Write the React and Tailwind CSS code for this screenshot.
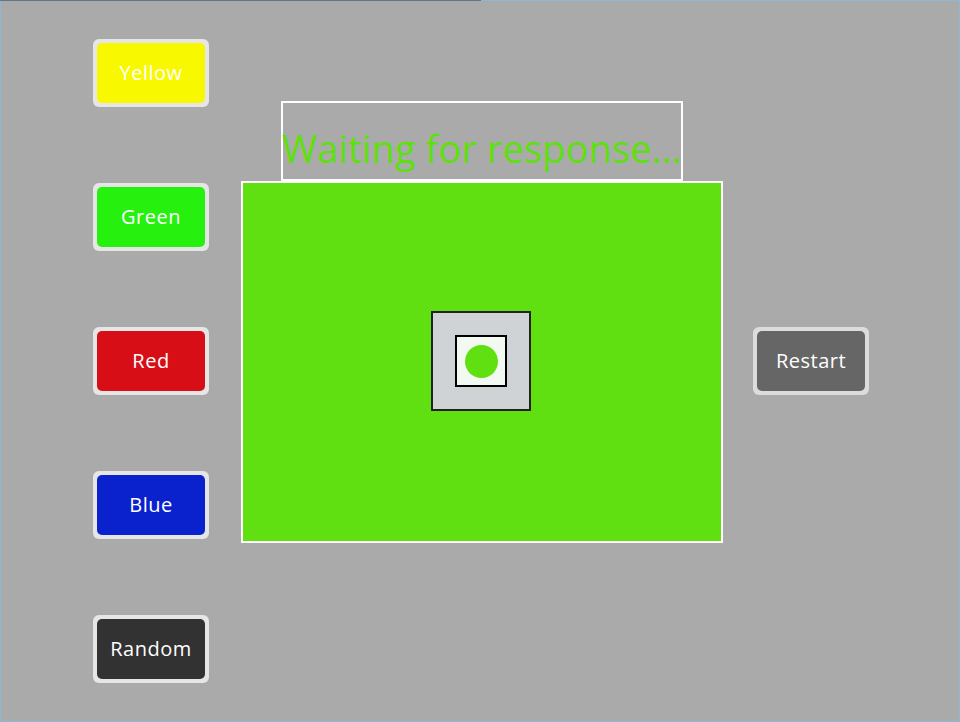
const COLOR_BUTTONS = [
  { label: 'Yellow', cls: 'bg-[#f8f800]' },
  { label: 'Green', cls: 'bg-[#26f00e]' },
  { label: 'Red', cls: 'bg-[#d80e16]' },
  { label: 'Blue', cls: 'bg-[#0a22ce]' },
  { label: 'Random', cls: 'bg-[#323232]' },
];

function GameButton({ label, cls, frame = 'bg-[#e6e6e6]' }) {
  return (
    <button className={`w-[116px] h-[68px] rounded-[6px] p-[4px] ${frame}`}>
      <span
        className={`w-full h-full rounded-[5px] ${cls} text-white text-[20px] tracking-[0.5px] flex items-center justify-center`}
      >
        {label}
      </span>
    </button>
  );
}

export default function App() {
  return (
    <div
      className="relative w-[960px] h-[722px] bg-[#aaaaaa] border border-[#8ab9d1] flex"
      style={{ fontFamily: "'Open Sans', sans-serif" }}
    >
      {/* progress strip on top edge */}
      <div className="absolute -top-px -left-px w-[481px] h-px bg-[#5e7787]" />

      {/* colour buttons */}
      <div className="flex flex-col gap-[76px] pt-[38px] pl-[92px]">
        {COLOR_BUTTONS.map(b => (
          <GameButton key={b.label} label={b.label} cls={b.cls} />
        ))}
      </div>

      {/* stage */}
      <div className="flex flex-col ml-[32px] pt-[100px]">
        <div className="mx-[40px] w-[402px] h-[80px] border-2 border-white flex items-end justify-center pb-[12px]">
          <span className="text-[#5ee00e] text-[38px] tracking-[0.1px] leading-none whitespace-nowrap">
            Waiting for response...
          </span>
        </div>
        <div className="w-[482px] h-[362px] border-2 border-white bg-[#60e010] flex items-center justify-center">
          <div className="w-[100px] h-[100px] -translate-x-px -translate-y-px border-2 border-[#222222] bg-[#d0d3d5] flex items-center justify-center">
            <div className="w-[52px] h-[52px] border-2 border-black bg-[#f1f9f0] flex items-center justify-center">
              <div className="w-[33px] h-[33px] rounded-full bg-[#60e010]" />
            </div>
          </div>
        </div>
      </div>

      {/* restart */}
      <div className="flex items-start pt-[326px] ml-[30px]">
        <GameButton label="Restart" cls="bg-[#666666]" frame="bg-[#dcdcdc]" />
      </div>
    </div>
  );
}
